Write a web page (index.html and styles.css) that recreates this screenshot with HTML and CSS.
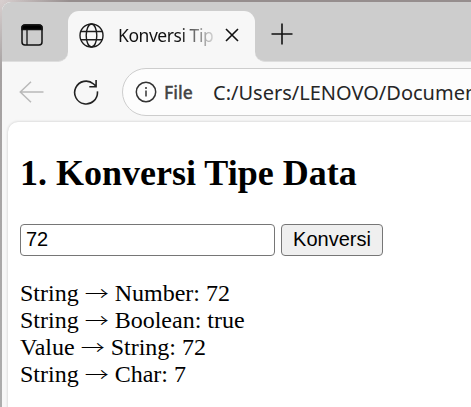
FILE: index.html
```html
<!DOCTYPE html>
<html lang="id">
<head>
<meta charset="utf-8">
<title>Konversi Tipe Data</title>
<link rel="stylesheet" href="styles.css">
</head>
<body>
<div class="window">
  <header class="tabs">
    <div class="menu-cell">
      <svg class="tab-menu" width="22" height="22" viewBox="0 0 22 22" fill="none" stroke="#111" stroke-width="1.5"><rect x="1" y="1" width="20" height="20" rx="3"/><path d="M1 5.5V4q0-3 3-3h14q3 0 3 3v1.5z" fill="#000"/><path d="M6 6v15" stroke-width="1.3"/></svg>
    </div>
    <div class="tab">
      <svg class="globe" width="25" height="25" viewBox="0 0 25 25" fill="none" stroke="#1c1c1c" stroke-width="1.4"><circle cx="12.5" cy="12.5" r="11.5"/><ellipse cx="12.5" cy="12.5" rx="5.3" ry="11.5"/><path d="M2 8.5h21M2 16.8h21"/></svg>
      <span class="tab-title">Konversi Tip</span>
      <svg class="close" width="14" height="14" viewBox="0 0 14 14" fill="none" stroke="#111" stroke-width="1.6"><path d="M1 1l12 12M13 1L1 13"/></svg>
    </div>
    <div class="new-cell">
      <svg width="22" height="22" viewBox="0 0 22 22" fill="none" stroke="#111" stroke-width="1.6"><path d="M11 .5v21M.5 11h21"/></svg>
    </div>
  </header>
  <nav class="toolbar">
    <svg class="back" width="25" height="22" viewBox="0 0 25 22" fill="none" stroke="#b9b9b9" stroke-width="1.5"><path d="M12 .8L1.3 11 12 21.2M1.3 11H24.5"/></svg>
    <svg class="reload" width="26" height="26" viewBox="0 0 26 26" fill="none" stroke="#222" stroke-width="1.6"><path d="M24.4 12.4A11.4 11.4 0 1 1 20.6 5L23.4 7.6M23.1 1V7.8H16.3"/></svg>
    <div class="address">
      <svg class="info" width="22" height="22" viewBox="0 0 22 22" fill="none" stroke="#333" stroke-width="1.5"><circle cx="11" cy="11" r="9.7"/><path d="M11 9.5v6M11 6v2"/></svg>
      <span class="scheme">File</span>
      <span class="url">C:/Users/LENOVO/Documen</span>
    </div>
  </nav>
  <main class="page">
    <h2>1. Konversi Tipe Data</h2>
    <div class="form"><input type="text" value="72"><button>Konversi</button></div>
    <p class="result">String <span class="arrow">→</span> Number: 72<br>String <span class="arrow">→</span> Boolean: true<br>Value <span class="arrow">→</span> String: 72<br>String <span class="arrow">→</span> Char: 7</p>
  </main>
</div>
</body>
</html>
```

FILE: styles.css
```css
* { box-sizing: border-box; }
body {
  margin: 0;
  height: 407px;
  overflow: hidden;
  padding: 2px 0 0 2px;
  background: linear-gradient(90deg, transparent 2px, #968e8e 70px), linear-gradient(#d8cfcf, #a5a1a1 70px, #adadad);
}
svg { display: block; flex: none; }
.window {
  width: 480px;
  height: 405px;
  border-radius: 9px 0 0 0;
  background: #f7f7f7;
  overflow: hidden;
}
.tabs {
  display: flex;
  height: 60px;
  background: #f7f7f7;
}
.menu-cell, .new-cell {
  background: #cdcdcd;
  border-bottom: 1px solid #dedede;
}
.menu-cell {
  width: 66px;
  padding: 22px 0 0 19px;
  border-radius: 0 0 10px 0;
}
.tab {
  display: flex;
  align-items: center;
  width: 187px;
  height: 60px;
  padding: 6px 0 0 11px;
  background: linear-gradient(#cdcdcd 30px, #f7f7f7 30px);
  position: relative;
  isolation: isolate;
}
.tab::before {
  content: "";
  position: absolute;
  inset: 9px 0 0;
  z-index: -1;
  border-radius: 11px 11px 0 0;
  background: #f7f7f7;
}
.tab-title {
  width: 97px;
  margin-left: 14px;
  font-family: "Noto Sans", sans-serif;
  font-size: 17.5px;
  line-height: 24px;
  letter-spacing: -.45px;
  white-space: nowrap;
  overflow: hidden;
  color: transparent;
  background: linear-gradient(90deg, #111 60px, #ddd 97px);
  background-clip: text;
}
.close { margin-left: 10px; }
.new-cell {
  flex: 1;
  padding: 21px 0 0 16px;
  border-radius: 0 0 0 10px;
}
.toolbar {
  display: flex;
  align-items: center;
  height: 60px;
  padding-left: 17px;
}
.reload { margin-left: 29px; }
.address {
  display: flex;
  align-items: center;
  flex: none;
  width: 400px;
  height: 48px;
  margin-left: 23px;
  padding-left: 12px;
  border: 1.5px solid #cdcdcd;
  border-radius: 24px;
  background: #fdfdfd;
  font-family: "Noto Sans", sans-serif;
  white-space: nowrap;
}
.scheme {
  margin-left: 7px;
  width: 49px;
  font-size: 17.5px;
  font-weight: 500;
  color: #444;
  -webkit-text-stroke: .3px #444;
}
.url { font-size: 20px; color: #262626; }
.page {
  height: 290px;
  margin-left: 6px;
  padding: 30px 0 0 12px;
  background: #fff;
  border-radius: 10px 0 0 0;
  box-shadow: 0 0 3px rgba(0, 0, 0, .2);
  font: 24px/27px "Liberation Serif", serif;
  color: #000;
}
h2 { margin: 0 0 30px; font-size: 36px; line-height: 42px; }
.form { display: flex; gap: 6px; }
input, button {
  height: 32px;
  margin: 0;
  border: 1px solid #767676;
  border-radius: 4px;
  font: 20px "Liberation Sans", sans-serif;
  color: #000;
}
input { width: 255px; padding: 0 5px 2px; }
button { width: 102px; padding: 0 0 2px; background: #efefef; }
.result { margin: 24px 0 0; }
.arrow {
  display: inline-block;
  font-family: "Noto Sans CJK JP", sans-serif;
  font-weight: 300;
  line-height: 0;
  transform: translateY(1.5px) scaleY(.8);
}
```
